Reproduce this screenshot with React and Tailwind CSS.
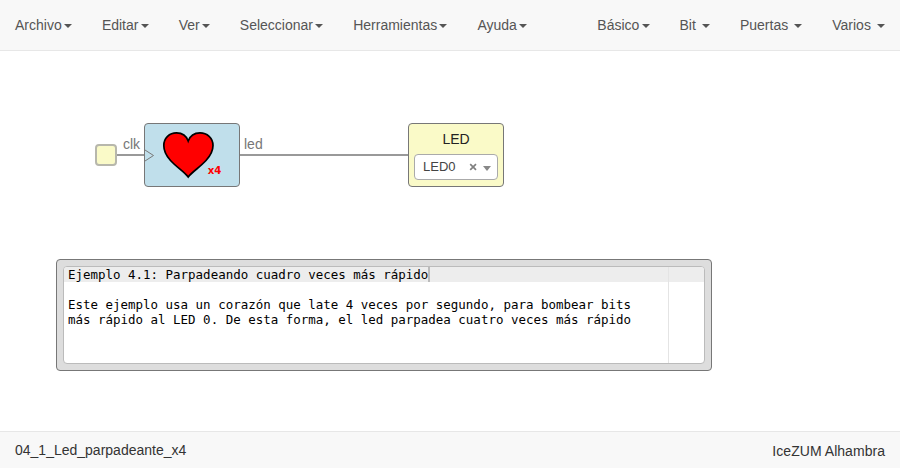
const leftMenus = ['Archivo', 'Editar', 'Ver', 'Seleccionar', 'Herramientas', 'Ayuda'];
const rightMenus = ['Básico', 'Bit ', 'Puertas ', 'Varios '];

function Menu({ label }) {
  return (
    <li className="group px-[15px] py-[15px] whitespace-pre">
      {label}
      <span className="ml-[2.2px] inline-block h-0 w-0 border-x-4 border-t-4 border-x-transparent border-t-[#555] align-middle" />
    </li>
  );
}

function Navbar() {
  return (
    <nav className="flex h-[51px] justify-between border-b border-[#e7e7e7] bg-[#f8f8f8] text-[14px] leading-[20px] text-[#555]">
      <ul className="flex">
        {leftMenus.map((label) => (
          <Menu key={label} label={label} />
        ))}
      </ul>
      <ul className="flex">
        {rightMenus.map((label) => (
          <Menu key={label} label={label} />
        ))}
      </ul>
    </nav>
  );
}

function HeartBlock() {
  return (
    <div className="absolute left-[144px] top-[72px] h-[64px] w-[96px] rounded-[4px] border border-[#777] bg-[#c0dfeb]">
      <svg className="block h-[62px] w-[94px]" viewBox="145 124 94 62">
        <path d="M145 150 L153.5 155.5 L145 161" fill="none" stroke="#777" strokeWidth="1" />
        <path
          d="M188.2 177 C184 171.5 177 167.5 170.5 160.5 C165.5 155 163.8 151 163.8 145.5 C163.8 138 169.5 132.8 176.5 132.8 C182 132.8 186.5 136 188.2 141 C190 136 194.5 132.8 200 132.8 C207 132.8 213 138 213 145.5 C213 151 211 155 206 160.5 C199.5 167.5 192.5 171.5 188.2 177 Z"
          fill="#f00"
          stroke="#000"
          strokeWidth="1.7"
        />
        <text x="207.8" y="174" fill="#f00" fontSize="10.2" fontWeight="700" fontFamily="DejaVu Sans, sans-serif">
          x4
        </text>
      </svg>
    </div>
  );
}

function LedBlock() {
  return (
    <div className="absolute left-[408px] top-[72px] flex h-[64px] w-[96px] flex-col items-center rounded-[4px] border border-[#777] bg-[#fafac8]">
      <span className="mt-[5px] text-[14px] leading-[20px] text-[#222]">LED</span>
      <div className="mt-[5px] flex h-[26px] w-[84px] items-center rounded-[4px] border border-[#aaa] bg-white pl-[8px] text-[13px] leading-[24px] text-[#444]">
        <span className="w-[46px]">LED0</span>
        <svg className="h-[8px] w-[8px]" viewBox="0 0 8 8">
          <path d="M1.2 1.2 L7 6.8 M7 1.2 L1.2 6.8" stroke="#808080" strokeWidth="1.7" />
        </svg>
        <span className="ml-[6px] mt-[3px] h-0 w-0 border-x-4 border-t-[5px] border-x-transparent border-t-[#888]" />
      </div>
    </div>
  );
}

function InfoBlock() {
  return (
    <div className="absolute left-[56px] top-[208px] h-[112px] w-[656px] rounded-[4px] border border-[#777] bg-[#ddd] p-[6px]">
      <div className="relative h-[98px] overflow-hidden rounded-[4px] border border-[#bbb] bg-white font-['DejaVu_Sans_Mono',monospace] text-[12.475px] leading-[15px] text-black">
        <div className="flex h-[15px] bg-[#ededed] pl-[4px] whitespace-pre">
          Ejemplo 4.1: Parpadeando cuadro veces más rápido
          <span className="w-[2px] bg-[#bbb]" />
        </div>
        <div className="pl-[4px] pt-[15px] whitespace-pre">
          Este ejemplo usa un corazón que late 4 veces por segundo, para bombear bits
        </div>
        <div className="pl-[4px] whitespace-pre">
          más rápido al LED 0. De esta forma, el led parpadea cuatro veces más rápido
        </div>
        <span className="absolute left-[604px] top-0 h-full w-px bg-[#e4e4e4]" />
      </div>
    </div>
  );
}

export default function App() {
  return (
    <div className="flex h-[468px] w-[900px] flex-col overflow-hidden bg-white font-['Liberation_Sans',Arial,sans-serif]">
      <Navbar />
      <main className="relative flex-1 text-[14px] leading-[20px] text-[#777]">
        <span className="absolute left-[116px] top-[103px] h-[2px] w-[28px] bg-[#999]" />
        <span className="absolute left-[240px] top-[103px] h-[2px] w-[168px] bg-[#999]" />
        <span className="absolute left-[123px] top-[83px]">clk</span>
        <span className="absolute left-[244px] top-[83px]">led</span>
        <span className="absolute left-[95px] top-[93px] h-[22px] w-[22px] rounded-[4px] border-2 border-[#b7b7ac] bg-[#fafac8]" />
        <HeartBlock />
        <LedBlock />
        <InfoBlock />
      </main>
      <footer className="flex h-[37px] items-start justify-between border-t border-[#e7e7e7] bg-[#f8f8f8] px-[15px] pt-[8px] text-[14px] leading-[20px] text-[#333]">
        <span>04_1_Led_parpadeante_x4</span>
        <span className="pt-px tracking-[0.04px]">IceZUM Alhambra</span>
      </footer>
    </div>
  );
}
